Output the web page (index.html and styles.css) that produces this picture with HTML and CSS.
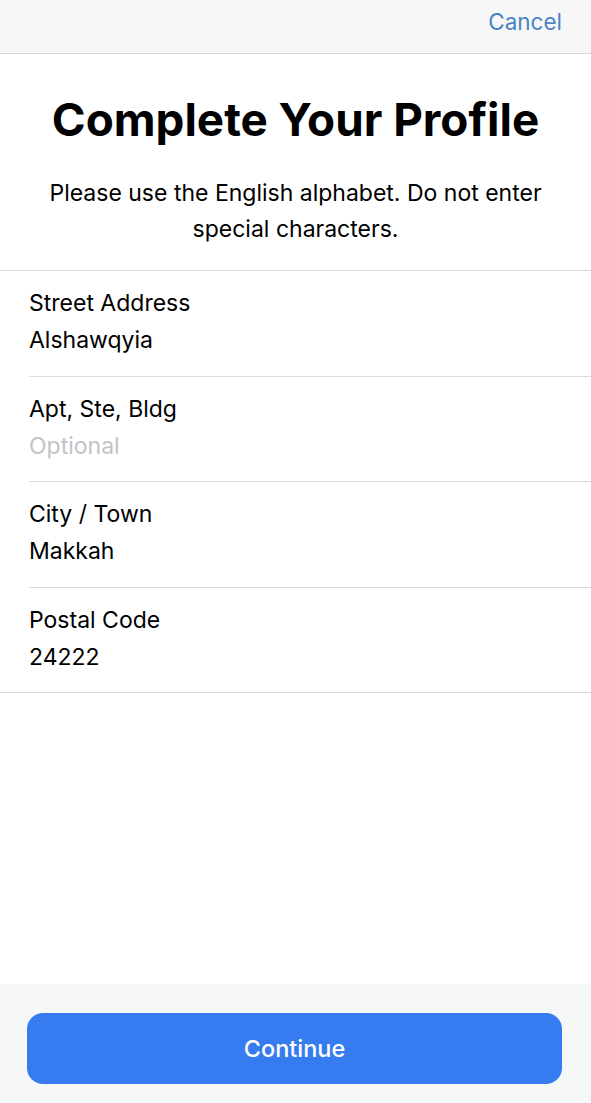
FILE: index.html
```html
<!DOCTYPE html>
<html lang="en">
<head>
<meta charset="utf-8">
<title>Complete Your Profile</title>
<link rel="stylesheet" href="styles.css">
</head>
<body>
<div class="screen">
  <header class="topbar">
    <span class="cancel">Cancel</span>
  </header>
  <main class="content">
    <div class="intro">
      <h1 class="title">Complete Your Profile</h1>
      <p class="subtitle">Please use the English alphabet. Do not enter special characters.</p>
    </div>
    <ul class="fields">
      <li class="field">
        <div class="label">Street Address</div>
        <div class="value">Alshawqyia</div>
      </li>
      <li class="field">
        <div class="label">Apt, Ste, Bldg</div>
        <div class="value placeholder">Optional</div>
      </li>
      <li class="field">
        <div class="label">City / Town</div>
        <div class="value">Makkah</div>
      </li>
      <li class="field last">
        <div class="label">Postal Code</div>
        <div class="value">24222</div>
      </li>
    </ul>
  </main>
  <footer class="footer">
    <button class="continue" type="button">Continue</button>
  </footer>
</div>
</body>
</html>
```

FILE: styles.css
```css
* { box-sizing: border-box; }
html, body { margin: 0; padding: 0; }
body {
  font-family: Inter, "Noto Sans", "Liberation Sans", sans-serif;
  color: #000;
  background: #fff;
}
.screen {
  width: 591px;
  height: 1103px;
  display: flex;
  flex-direction: column;
  background: #fff;
}
.topbar {
  height: 54px;
  background: #f7f7f7;
  border-bottom: 1px solid #d8d8d8;
  display: flex;
  justify-content: flex-end;
  align-items: center;
  padding: 0 29px 10px 0;
}
.cancel {
  font-size: 22.5px;
  color: #4a84c6;
}
.content {
  flex: 1;
}
.intro {
  padding: 36px 10px 23px;
  text-align: center;
  border-bottom: 1px solid #dcdcdc;
}
.title {
  margin: 0;
  font-size: 45.8px;
  font-weight: 700;
  line-height: 60px;
}
.subtitle {
  margin: 25px 0 0;
  font-size: 23px;
  line-height: 36px;
  padding: 0 30px;
}
.fields {
  list-style: none;
  margin: 0;
  padding: 0;
}
.field {
  height: 105.5px;
  margin-left: 29px;
  padding-top: 14px;
  border-bottom: 1px solid #dcdcdc;
  font-size: 23px;
  line-height: 37px;
}
.field.last {
  margin-left: 0;
  padding-left: 29px;
}
.placeholder {
  color: #c3c3c6;
}
.footer {
  height: 119px;
  background: #f6f7f7;
  padding: 29px 29px 0 27px;
}
.continue {
  display: block;
  width: 100%;
  height: 71px;
  border: 0;
  border-radius: 16px;
  background: #377bf0;
  color: #fff;
  font-family: Inter, "Noto Sans", "Liberation Sans", sans-serif;
  font-size: 23.5px;
  font-weight: 500;
}
```
